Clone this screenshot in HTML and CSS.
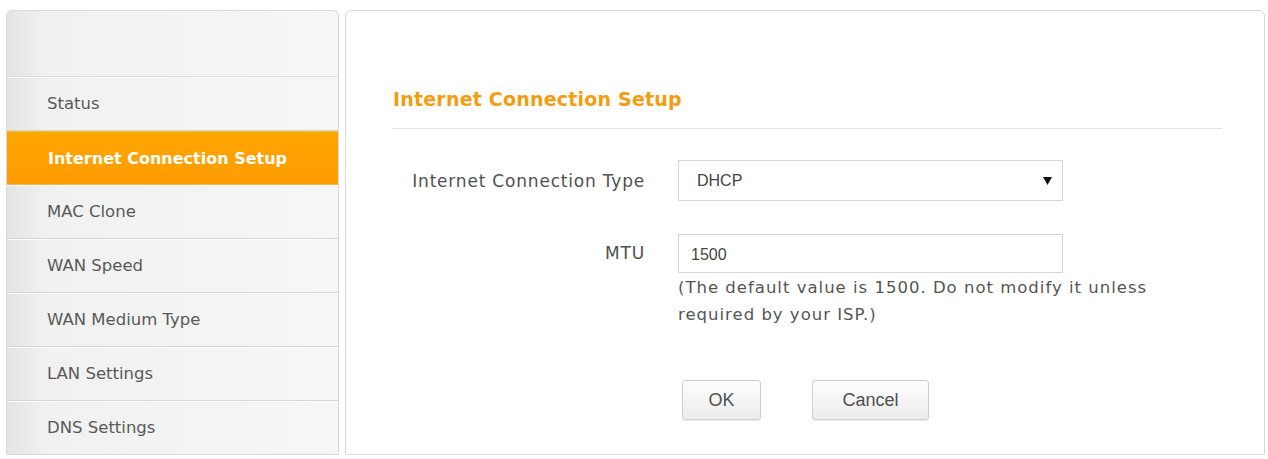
FILE: index.html
```html
<!DOCTYPE html>
<html lang="en">
<head>
  <meta charset="UTF-8" />
  <title>Internet Connection Setup</title>
  <link rel="stylesheet" href="styles.css">
</head>
<body>

<div class="page">
  <nav class="sidebar">
    <div class="sidebar-head"></div>
    <a href="#" class="nav-item">Status</a>
    <a href="#" class="nav-item active">Internet Connection Setup</a>
    <a href="#" class="nav-item">MAC Clone</a>
    <a href="#" class="nav-item">WAN Speed</a>
    <a href="#" class="nav-item">WAN Medium Type</a>
    <a href="#" class="nav-item">LAN Settings</a>
    <a href="#" class="nav-item last">DNS Settings</a>
  </nav>

  <div class="main">
    <h2 class="title">Internet Connection Setup</h2>

    <form class="setup-form" onsubmit="return false;">
      <div class="form-row">
        <label class="form-label" for="conn-type">Internet Connection Type</label>
        <div class="select-wrap">
          <select id="conn-type" class="field">
            <option>DHCP</option>
            <option>Static IP</option>
            <option>PPPoE</option>
          </select>
          <svg class="select-arrow" width="9" height="8" viewBox="0 0 9 8"><path d="M0 0 H9 L4.5 8 Z" fill="#111"/></svg>
        </div>
      </div>

      <div class="form-row mtu-row">
        <label class="form-label" for="mtu">MTU</label>
        <div class="field-col">
          <input type="text" id="mtu" class="field" value="1500" />
          <p class="hint">(The default value is 1500. Do not modify it unless required by your ISP.)</p>
        </div>
      </div>

      <div class="buttons">
        <button type="submit" class="btn btn-ok">OK</button>
        <button type="button" class="btn btn-cancel">Cancel</button>
      </div>
    </form>
  </div>
</div>

</body>
</html>
```

FILE: styles.css
```css
body {
  margin: 0;
  padding: 0;
  background: #ffffff;
  font-family: 'DejaVu Sans', Verdana, sans-serif;
  color: #555555;
}

.page {
  display: flex;
  gap: 6px;
  padding: 10px 3px 4px 6px;
  height: 445px;
}

/* left menu */
.sidebar {
  width: 331px;
  flex: none;
  display: flex;
  flex-direction: column;
  border: 1px solid #d9d9d9;
  border-radius: 6px 6px 0 0;
  background: linear-gradient(to right, #e4e4e4, #f1f1f1 12%, #f6f6f6);
  overflow: hidden;
}

.sidebar-head {
  height: 65px;
  border-bottom: 1px solid #dcdcdc;
  box-shadow: 0 1px 0 #ffffff;
}

.nav-item {
  display: flex;
  align-items: center;
  height: 53px;
  padding-left: 40px;
  font-size: 16.5px;
  color: #595959;
  text-decoration: none;
  border-bottom: 1px solid #d6d6d6;
  box-shadow: inset 0 1px 0 #fbfbfb;
}

.nav-item.active {
  background: linear-gradient(to bottom, #ffa600, #ff9c00);
  border-top: 1px solid #f0c040;
  border-bottom: 1px solid #e8b860;
  box-shadow: none;
  color: #ffffff;
  font-weight: bold;
  font-size: 16px;
  height: 52px;
  padding-left: 41px;
}

.nav-item.last {
  border-bottom: none;
}

/* right panel */
.main {
  flex: 1;
  border: 1px solid #dadada;
  border-radius: 6px 6px 0 0;
  padding: 0 42px 0 46px;
}

.title {
  margin: 77px 0 0 0;
  padding: 0 0 18px 1px;
  font-size: 19px;
  font-weight: bold;
  color: #f29d12;
  letter-spacing: 0.2px;
  border-bottom: 1px solid #e3e3e3;
}

.setup-form {
  padding-top: 31px;
}

.form-row {
  display: flex;
  align-items: center;
  gap: 33px;
}

.form-label {
  width: 253px;
  text-align: right;
  font-size: 17px;
  letter-spacing: 0.8px;
  color: #505050;
}

.mtu-row {
  align-items: flex-start;
  margin-top: 33px;
}

.mtu-row .form-label {
  padding-top: 9px;
}

.select-wrap {
  position: relative;
}

.field {
  box-sizing: border-box;
  width: 385px;
  border: 1px solid #d4d4d4;
  background: #ffffff;
  font-family: 'Liberation Sans', Arial, sans-serif;
  font-size: 16px;
  color: #444444;
  outline: none;
}

select.field {
  height: 41px;
  padding: 0 18px;
  appearance: none;
  -webkit-appearance: none;
  border-radius: 0;
}

input.field {
  height: 39px;
  padding: 2px 12px 0 12px;
}

.select-arrow {
  position: absolute;
  right: 11px;
  top: 17px;
  pointer-events: none;
}

.hint {
  margin: 1px 0 0 0;
  width: 490px;
  font-size: 16.5px;
  line-height: 27px;
  letter-spacing: 1px;
  color: #555555;
}

.buttons {
  display: flex;
  gap: 51px;
  margin: 52px 0 0 290px;
}

.btn {
  height: 40px;
  border: 1px solid #cfcfcf;
  border-radius: 3px;
  background: linear-gradient(to bottom, #fdfdfd, #ececec);
  font-family: 'Liberation Sans', Arial, sans-serif;
  font-size: 18px;
  color: #505050;
  cursor: pointer;
  box-shadow: 0 1px 1px rgba(0, 0, 0, 0.08);
}

.btn-ok {
  width: 79px;
}

.btn-cancel {
  width: 117px;
}
```
